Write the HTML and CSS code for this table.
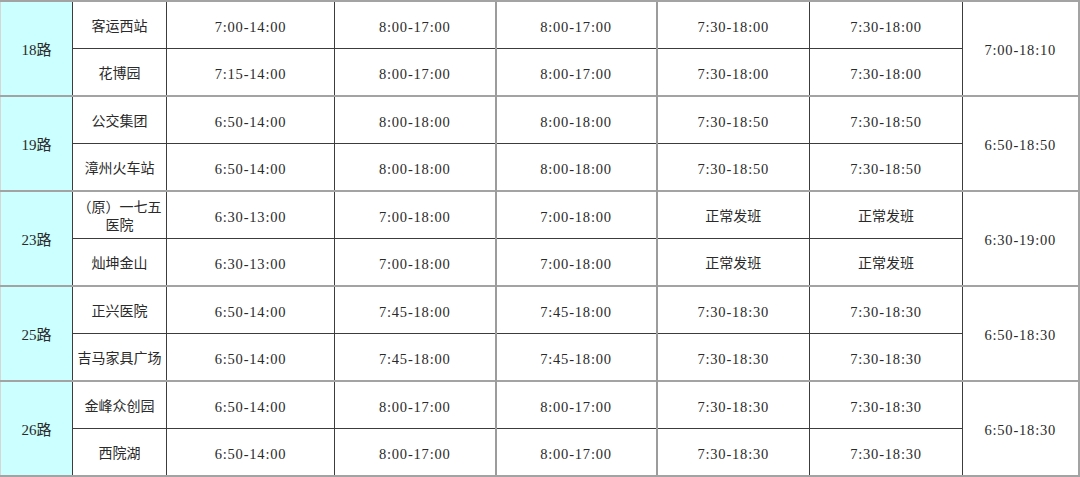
FILE: index.html
```html
<!DOCTYPE html>
<html lang="zh-CN">
<head>
<meta charset="utf-8">
<title>公交线路运营时间</title>
<link rel="stylesheet" href="styles.css">
</head>
<body>
<table class="schedule">
  <colgroup>
    <col class="c-route"><col class="c-stop"><col class="c-t1"><col class="c-t2"><col class="c-t3"><col class="c-t4"><col class="c-t5"><col class="c-all">
  </colgroup>
  <tbody class="grp">
    <tr>
      <td class="route" rowspan="2">18路</td>
      <td class="stop">客运西站</td>
      <td class="time">7:00-14:00</td><td class="time">8:00-17:00</td><td class="time g">8:00-17:00</td><td class="time g">7:30-18:00</td><td class="time">7:30-18:00</td>
      <td class="time all" rowspan="2">7:00-18:10</td>
    </tr>
    <tr class="second">
      <td class="stop">花博园</td>
      <td class="time">7:15-14:00</td><td class="time">8:00-17:00</td><td class="time g">8:00-17:00</td><td class="time g">7:30-18:00</td><td class="time">7:30-18:00</td>
    </tr>
  </tbody>
  <tbody class="grp">
    <tr>
      <td class="route" rowspan="2">19路</td>
      <td class="stop">公交集团</td>
      <td class="time">6:50-14:00</td><td class="time">8:00-18:00</td><td class="time g">8:00-18:00</td><td class="time g">7:30-18:50</td><td class="time">7:30-18:50</td>
      <td class="time all" rowspan="2">6:50-18:50</td>
    </tr>
    <tr class="second">
      <td class="stop">漳州火车站</td>
      <td class="time">6:50-14:00</td><td class="time">8:00-18:00</td><td class="time g">8:00-18:00</td><td class="time g">7:30-18:50</td><td class="time">7:30-18:50</td>
    </tr>
  </tbody>
  <tbody class="grp">
    <tr>
      <td class="route" rowspan="2">23路</td>
      <td class="stop">（原）一七五医院</td>
      <td class="time">6:30-13:00</td><td class="time">7:00-18:00</td><td class="time g">7:00-18:00</td><td class="time g cn">正常发班</td><td class="time cn">正常发班</td>
      <td class="time all" rowspan="2">6:30-19:00</td>
    </tr>
    <tr class="second">
      <td class="stop">灿坤金山</td>
      <td class="time">6:30-13:00</td><td class="time">7:00-18:00</td><td class="time g">7:00-18:00</td><td class="time g cn">正常发班</td><td class="time cn">正常发班</td>
    </tr>
  </tbody>
  <tbody class="grp">
    <tr>
      <td class="route" rowspan="2">25路</td>
      <td class="stop">正兴医院</td>
      <td class="time">6:50-14:00</td><td class="time">7:45-18:00</td><td class="time g">7:45-18:00</td><td class="time g">7:30-18:30</td><td class="time">7:30-18:30</td>
      <td class="time all" rowspan="2">6:50-18:30</td>
    </tr>
    <tr class="second">
      <td class="stop">吉马家具广场</td>
      <td class="time">6:50-14:00</td><td class="time">7:45-18:00</td><td class="time g">7:45-18:00</td><td class="time g">7:30-18:30</td><td class="time">7:30-18:30</td>
    </tr>
  </tbody>
  <tbody class="grp">
    <tr>
      <td class="route" rowspan="2">26路</td>
      <td class="stop">金峰众创园</td>
      <td class="time">6:50-14:00</td><td class="time">8:00-17:00</td><td class="time g">8:00-17:00</td><td class="time g">7:30-18:30</td><td class="time">7:30-18:30</td>
      <td class="time all" rowspan="2">6:50-18:30</td>
    </tr>
    <tr class="second">
      <td class="stop">西院湖</td>
      <td class="time">6:50-14:00</td><td class="time">8:00-17:00</td><td class="time g">8:00-17:00</td><td class="time g">7:30-18:30</td><td class="time">7:30-18:30</td>
    </tr>
  </tbody>
</table>
</body>
</html>
```

FILE: styles.css
```css
html, body {
  margin: 0;
  padding: 0;
  background: #ffffff;
}

.schedule {
  border-collapse: collapse;
  table-layout: fixed;
  width: 1078px;
  color: #2a2a2a;
  font-family: "Noto Sans CJK SC", "Liberation Serif", serif;
  font-size: 14px;
}

.c-route { width: 72px; }
.c-stop { width: 94px; }
.c-t1 { width: 168px; }
.c-t2 { width: 161px; }
.c-t3 { width: 161px; }
.c-t4 { width: 153px; }
.c-t5 { width: 153px; }
.c-all { width: 116px; }

.schedule td {
  height: 47.5px;
  padding: 0 3px;
  box-sizing: border-box;
  text-align: center;
  vertical-align: middle;
  line-height: 18px;
  border: 1px solid #3c3c3c;
}

.grp tr:first-child td {
  border-top: 2px solid #a3a3a3;
}

.grp:last-child tr.second td,
.grp:last-child .route,
.grp:last-child .all {
  border-bottom: 2px solid #a3a3a3;
}

.schedule .route {
  background: #ccffff;
  border-left: 1px solid #d6d6d6;
  font-family: "Liberation Serif", "Noto Sans CJK SC", serif;
  font-size: 15px;
  padding-top: 3px;
}

.schedule .stop {
  font-family: "Noto Sans CJK SC", sans-serif;
  padding: 0 1px;
}

.schedule .time {
  font-family: "Liberation Serif", "Noto Sans CJK SC", serif;
  font-size: 14.5px;
  letter-spacing: 0.8px;
  padding-top: 3px;
}

.schedule .time.cn {
  font-family: "Noto Sans CJK SC", sans-serif;
  font-size: 14px;
  letter-spacing: 0;
  padding-top: 0;
}

.schedule .g {
  border-left: 2px solid #9c9c9c;
}

.schedule .all {
  border-right: 2px solid #a3a3a3;
}
```
